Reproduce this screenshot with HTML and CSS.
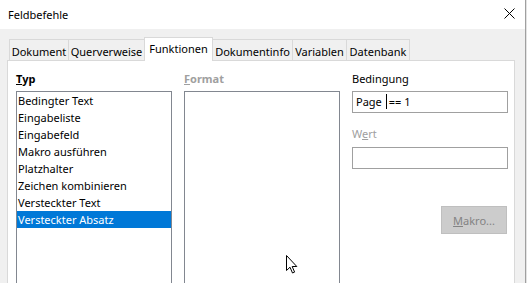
FILE: index.html
```html
<!DOCTYPE html>
<html lang="de">
<head>
    <meta charset="UTF-8">
    <title>Feldbefehle</title>
    <link rel="stylesheet" href="styles.css">
</head>
<body>
    <div class="screen">
        <div class="dialog">
            <div class="titlebar">
                <span class="title">Feldbefehle</span>
                <svg class="close" width="11" height="11" viewBox="0 0 11 11">
                    <path d="M0.5 0.5 L10.5 10.5 M10.5 0.5 L0.5 10.5" stroke="#000" stroke-width="1" fill="none"/>
                </svg>
            </div>

            <div class="dialog-body">
                <div class="tabs">
                    <div class="tab" style="width: 60px">Dokument</div>
                    <div class="tab" style="width: 77px">Querverweise</div>
                    <div class="tab active" style="width: 69px">Funktionen</div>
                    <div class="tab" style="width: 81px">Dokumentinfo</div>
                    <div class="tab" style="width: 55px">Variablen</div>
                    <div class="tab" style="width: 64px">Datenbank</div>
                </div>

                <div class="pane">
                    <div class="column">
                        <div class="label bold"><u>T</u>yp</div>
                        <div class="listbox">
                            <div class="list-item">Bedingter Text</div>
                            <div class="list-item">Eingabeliste</div>
                            <div class="list-item">Eingabefeld</div>
                            <div class="list-item">Makro ausführen</div>
                            <div class="list-item">Platzhalter</div>
                            <div class="list-item">Zeichen kombinieren</div>
                            <div class="list-item">Versteckter Text</div>
                            <div class="list-item selected">Versteckter Absatz</div>
                        </div>
                    </div>

                    <div class="column">
                        <div class="label bold disabled"><u>F</u>ormat</div>
                        <div class="listbox"></div>
                    </div>

                    <div class="column">
                        <div class="label">Bedingung</div>
                        <div class="textbox">Page<span class="caret"></span>== 1</div>
                        <div class="label disabled spaced">W<u>e</u>rt</div>
                        <div class="textbox"></div>
                        <button class="macro-button"><u>M</u>akro...</button>
                    </div>
                </div>
            </div>
        </div>
        <div class="edge"></div>
    </div>

    <!-- mouse pointer sitting over the format list -->
    <svg class="pointer" width="12" height="19" viewBox="0 0 12 19">
        <path d="M0.5 0.5 L0.5 15.5 L4 12.2 L6.5 18 L8.6 17.1 L6.2 11.5 L10.8 11.5 Z" fill="#fff" stroke="#000" stroke-width="1" stroke-linejoin="miter"/>
    </svg>
</body>
</html>
```

FILE: styles.css
```css
body {
    margin: 0;
    font-family: "Noto Sans", "Liberation Sans", sans-serif;
    font-size: 11px;
    color: #000;
    background-color: #f0f0f0;
    overflow: hidden;
}
.screen {
    display: flex;
    width: 527px;
    height: 283px;
    overflow: hidden;
}
.dialog {
    width: 525px;
    background: #f0f0f0;
}
.edge {
    width: 1px;
    border-left: 1px solid #a0a0a0;
    background: #e3e3e3;
}
.titlebar {
    height: 29px;
    background: white;
    display: flex;
    align-items: center;
    justify-content: space-between;
    padding: 0 10px 0 8px;
    box-sizing: border-box;
}
.title {
    font-size: 11px;
    margin-top: -1px;
}
.close {
    margin-top: -2px;
    display: block;
}
.dialog-body {
    padding: 8px 0 0 7px;
}
.tabs {
    display: flex;
    align-items: flex-end;
    height: 23px;
    padding-left: 2px;
    position: relative;
    z-index: 1;
}
.tab {
    box-sizing: border-box;
    height: 21px;
    line-height: 21px;
    padding-top: 1px;
    text-align: center;
    white-space: nowrap;
    background: #f0f0f0;
    border: 1px solid #d9d9d9;
    border-bottom: none;
    margin-left: -1px;
}
.tab:first-child {
    margin-left: 0;
}
.tab.active {
    height: 24px;
    line-height: 22px;
    padding-top: 0;
    margin-bottom: -1px;
    background: white;
}
.pane {
    width: 508px;
    height: 240px;
    box-sizing: border-box;
    background: white;
    border: 1px solid #d9d9d9;
    padding: 9px 0 0 8px;
    display: grid;
    grid-template-columns: 156px 156px 156px;
    gap: 12px;
    align-items: start;
}
.column {
    display: flex;
    flex-direction: column;
}
.label {
    height: 17px;
    line-height: 17px;
    margin-bottom: 4px;
}
.label.bold {
    font-weight: bold;
}
.label.disabled {
    color: #a0a0a0;
}
.label.spaced {
    margin-top: 12px;
    margin-bottom: 5px;
}
.listbox {
    height: 200px;
    border: 1px solid #828790;
    background: white;
}
.list-item {
    height: 17px;
    line-height: 17px;
    padding-left: 1px;
    white-space: nowrap;
}
.list-item.selected {
    background: #0078d7;
    color: white;
}
.textbox {
    box-sizing: border-box;
    height: 22px;
    line-height: 20px;
    border: 1px solid #a0a0a0;
    padding-left: 3px;
    background: white;
}
.caret {
    display: inline-block;
    width: 1px;
    height: 15px;
    background: #000;
    margin: 0 2px 0 4px;
    vertical-align: -3px;
}
.macro-button {
    align-self: flex-end;
    margin-top: 37px;
    margin-right: 1px;
    width: 66px;
    height: 28px;
    background: #cccccc;
    border: 1px solid #bfbfbf;
    color: #838383;
    font-family: inherit;
    font-size: 11px;
    padding: 0;
}
.pointer {
    position: absolute;
    left: 286px;
    top: 255px;
}
```
